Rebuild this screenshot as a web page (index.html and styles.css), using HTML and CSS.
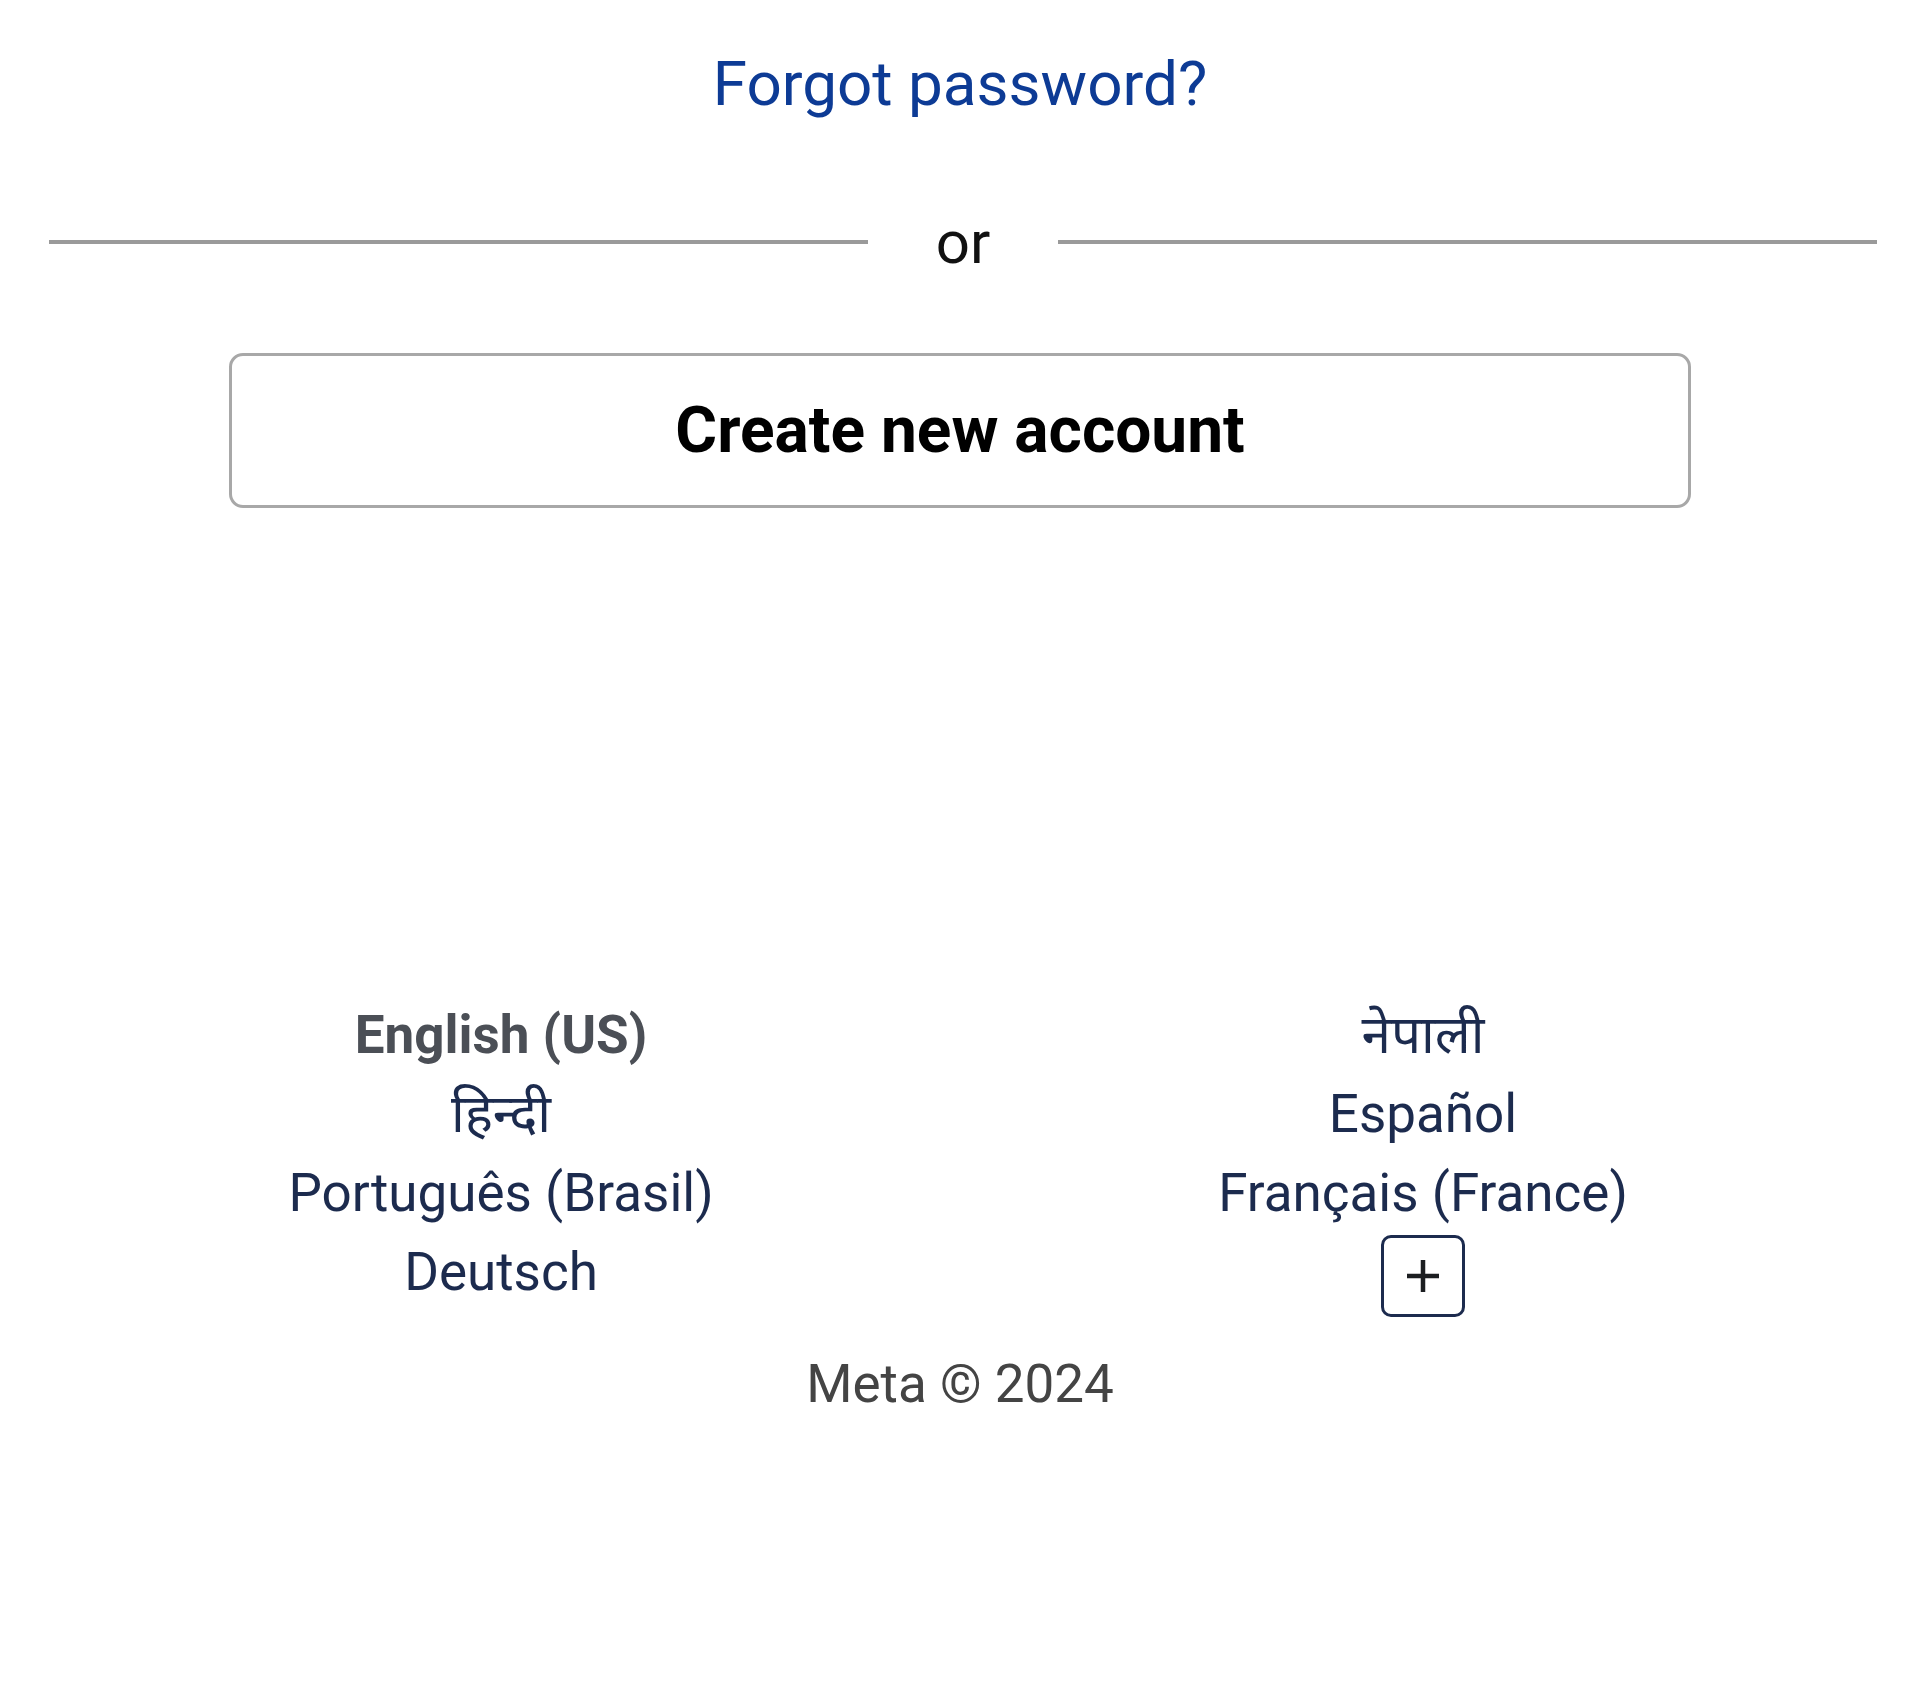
FILE: index.html
```html
<!DOCTYPE html>
<html lang="en">
<head>
  <meta charset="UTF-8">
  <title>Log in</title>
  <link rel="stylesheet" href="styles.css">
</head>
<body>
  <div class="login-bottom">
    <a class="forgot" href="#">Forgot password?</a>

    <div class="divider">
      <span class="line"></span>
      <span class="or">or</span>
      <span class="line"></span>
    </div>

    <button class="create-btn">Create new account</button>
  </div>

  <footer>
    <div class="langs">
      <ul class="lang-col">
        <li class="current">English (US)</li>
        <li><a href="#">हिन्दी</a></li>
        <li><a href="#">Português (Brasil)</a></li>
        <li><a href="#">Deutsch</a></li>
      </ul>
      <ul class="lang-col">
        <li><a href="#">नेपाली</a></li>
        <li><a href="#">Español</a></li>
        <li><a href="#">Français (France)</a></li>
        <li>
          <button class="more-btn" aria-label="More languages">
            <svg width="38" height="38" viewBox="0 0 38 38">
              <path d="M19 3v32M3 19h32" stroke="#1c1e21" stroke-width="4.5" fill="none"/>
            </svg>
          </button>
        </li>
      </ul>
    </div>
    <div class="copyright">Meta © 2024</div>
  </footer>
</body>
</html>
```

FILE: styles.css
```css
body {
  margin: 0;
  background: #fff;
  font-family: Roboto, "Noto Sans", "Noto Sans Devanagari", sans-serif;
}
a {
  text-decoration: none;
}
.login-bottom {
  display: flex;
  flex-direction: column;
  align-items: center;
}
.forgot {
  margin-top: 54px;
  font-size: 62px;
  line-height: 60px;
  color: #0d3b95;
}
.divider {
  align-self: stretch;
  display: flex;
  align-items: center;
  margin-top: 98px;
  padding: 0 43px 0 49px;
  height: 60px;
}
.divider .line {
  flex: 1;
  height: 4px;
  background: #9a9a9a;
}
.divider .or {
  width: 190px;
  text-align: center;
  font-size: 60px;
  color: #111;
}
.create-btn {
  margin-top: 81px;
  width: 1462px;
  height: 155px;
  background: #fff;
  border: 3px solid #a8a8a8;
  border-radius: 14px;
  font-family: Roboto, sans-serif;
  font-weight: bold;
  font-size: 64px;
  color: #000;
  cursor: pointer;
}
footer {
  margin-top: 488px;
}
.langs {
  display: grid;
  grid-template-columns: 1fr 1fr;
  padding: 0 36px 0 40px;
}
.lang-col {
  list-style: none;
  margin: 0;
  padding: 0;
  text-align: center;
}
.lang-col li {
  font-size: 53px;
  line-height: 79px;
}
.lang-col a {
  color: #1c2b4e;
}
.lang-col .current {
  font-weight: bold;
  color: #4b4f56;
}
.more-btn {
  display: inline-flex;
  align-items: center;
  justify-content: center;
  width: 84px;
  height: 82px;
  padding: 0;
  background: #fff;
  border: 3px solid #1c2b4e;
  border-radius: 10px;
  vertical-align: middle;
  cursor: pointer;
}
.copyright {
  margin-top: 37px;
  text-align: center;
  font-size: 53px;
  line-height: 60px;
  color: #444;
}
```
